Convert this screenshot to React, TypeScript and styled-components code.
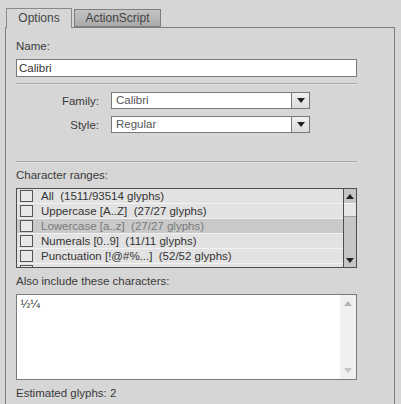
import React from 'react';
import styled, { createGlobalStyle } from 'styled-components';

const GlobalStyle = createGlobalStyle`
  body {
    margin: 0;
    background: #d6d6d6;
    font-family: "Liberation Sans", Arial, sans-serif;
    font-size: 11.5px;
    color: #3a3a3a;
  }
`

const Page = styled.div`
  padding: 8px 0 0 5px;
  width: 390px;
  height: 396px;
  overflow: hidden;
`

const TabBar = styled.div`
  display: flex;
  align-items: flex-end;
  gap: 2px;
  padding-left: 1px;
  height: 19px;
  position: relative;
  z-index: 1;
`

const Tab = styled.div<{ $active?: boolean; $w: number }>`
  box-sizing: border-box;
  width: ${p => p.$w}px;
  height: ${p => (p.$active ? 20 : 18)}px;
  margin-bottom: ${p => (p.$active ? -1 : 0)}px;
  border: 1px solid ${p => (p.$active ? '#8a8a8a' : '#7e7e7e')};
  border-bottom: ${p => (p.$active ? 'none' : '1px solid #7e7e7e')};
  background: ${p => (p.$active ? '#d6d6d6' : 'linear-gradient(#c4c4c4, #a9a9a9)')};
  display: flex;
  align-items: center;
  justify-content: center;
  padding-bottom: ${p => (p.$active ? 1 : 0)}px;
  color: #444;
  font-size: 12px;
`

const Panel = styled.div`
  border: 1px solid #7e7e7e;
  border-bottom: none;
  padding: 0 37px 0 10px;
  height: 380px;
`

const Label = styled.div<{ $mt?: number }>`
  line-height: 14px;
  margin-top: ${p => p.$mt ?? 6}px;
`

const TextInput = styled.div`
  box-sizing: border-box;
  margin-top: 6px;
  height: 18px;
  border: 1px solid #7a7a7a;
  background: #fff;
  padding-left: 2px;
  line-height: 16px;
  color: #333;
`

const Separator = styled.div<{ $mt: number }>`
  margin-top: ${p => p.$mt}px;
  height: 1px;
  background: #a9a9a9;
  box-shadow: 0 1px 0 #e2e2e2;
`

const FormGrid = styled.div`
  margin-top: 8px;
  display: grid;
  grid-template-columns: 83px 199px;
  column-gap: 12px;
  row-gap: 7px;
  align-items: center;
`

const FieldLabel = styled.div`
  text-align: right;
`

const Select = styled.div`
  box-sizing: border-box;
  height: 17px;
  border: 1px solid #7a7a7a;
  background: #fff;
  display: flex;
`

const SelectText = styled.div`
  flex: 1;
  padding-left: 4px;
  line-height: 15px;
  color: #555;
`

const SelectButton = styled.div`
  width: 17px;
  border-left: 1px solid #7a7a7a;
  background: linear-gradient(#f0f0f0, #dcdcdc);
  display: flex;
  align-items: center;
  justify-content: center;
`

const List = styled.div`
  box-sizing: border-box;
  margin-top: 6px;
  height: 80px;
  border: 1px solid #4e4e4e;
  display: flex;
  overflow: hidden;
`

const Rows = styled.div`
  flex: 1;
  overflow: hidden;
`

const Row = styled.div<{ $hl?: boolean }>`
  box-sizing: border-box;
  height: 15px;
  display: flex;
  align-items: center;
  padding-left: 3px;
  background: ${p => (p.$hl ? '#c9c9c9' : '#e2e2e2')};
  border-bottom: 1px solid #f2f2f2;
  color: ${p => (p.$hl ? '#7a7a7a' : '#333')};
  white-space: pre;
  overflow: hidden;
`

const Check = styled.div`
  box-sizing: border-box;
  flex: none;
  width: 13px;
  height: 12px;
  border: 1px solid #555;
  background: #e8e8e8;
  margin-right: 8px;
`

const ScrollBar = styled.div`
  width: 12px;
  border-left: 1px solid #4e4e4e;
  background: #c6c6c6;
  display: flex;
  flex-direction: column;
`

const ScrollBtn = styled.div`
  height: 14px;
  display: flex;
  align-items: center;
  justify-content: center;
  background: #c6c6c6;
`

const Thumb = styled.div`
  height: 12px;
  background: #e6e6e6;
  border-top: 1px solid #f4f4f4;
  border-bottom: 1px solid #a0a0a0;
`

const Track = styled.div`
  flex: 1;
`

const TextArea = styled.div`
  box-sizing: border-box;
  margin-top: 6px;
  height: 86px;
  border: 1px solid #7a7a7a;
  background: #fff;
  display: flex;
`

const AreaText = styled.div`
  flex: 1;
  padding: 3px 0 0 3px;
  font-family: "DejaVu Sans", sans-serif;
  font-size: 11px;
  letter-spacing: -1px;
  color: #333;
`

const AreaScroll = styled.div`
  width: 16px;
  background: #efefef;
  display: flex;
  flex-direction: column;
  justify-content: space-between;
  padding: 6px 0 6px;
  align-items: center;
`

const Arrow = ({ up, color = '#222' }: { up?: boolean; color?: string }) => (
  <svg width="8" height="5" viewBox="0 0 8 5">
    <path d={up ? 'M0 5 L4 0 L8 5 Z' : 'M0 0 L8 0 L4 5 Z'} fill={color} />
  </svg>
)

const ranges = [
  { text: 'All  (1511/93514 glyphs)' },
  { text: 'Uppercase [A..Z]  (27/27 glyphs)' },
  { text: 'Lowercase [a..z]  (27/27 glyphs)', hl: true },
  { text: 'Numerals [0..9]  (11/11 glyphs)' },
  { text: 'Punctuation [!@#%...]  (52/52 glyphs)' },
  { text: 'Basic Latin  (95/95 glyphs)' },
]

export default function App() {
  return (
    <Page>
      <GlobalStyle />
      <TabBar>
        <Tab $active $w={66}>Options</Tab>
        <Tab $w={87}>ActionScript</Tab>
      </TabBar>
      <Panel>
        <Label $mt={11}>Name:</Label>
        <TextInput>Calibri</TextInput>
        <Separator $mt={6} />
        <FormGrid>
          <FieldLabel>Family:</FieldLabel>
          <Select>
            <SelectText>Calibri</SelectText>
            <SelectButton><Arrow /></SelectButton>
          </Select>
          <FieldLabel>Style:</FieldLabel>
          <Select>
            <SelectText>Regular</SelectText>
            <SelectButton><Arrow /></SelectButton>
          </Select>
        </FormGrid>
        <Separator $mt={28} />
        <Label>Character ranges:</Label>
        <List>
          <Rows>
            {ranges.map(r => (
              <Row key={r.text} $hl={r.hl}>
                <Check />
                {r.text}
              </Row>
            ))}
          </Rows>
          <ScrollBar>
            <ScrollBtn><Arrow up /></ScrollBtn>
            <Thumb />
            <Track />
            <ScrollBtn><Arrow /></ScrollBtn>
          </ScrollBar>
        </List>
        <Label>Also include these characters:</Label>
        <TextArea>
          <AreaText>½¼</AreaText>
          <AreaScroll>
            <Arrow up color="#b4b4b4" />
            <Arrow color="#c4c4c4" />
          </AreaScroll>
        </TextArea>
        <Label>Estimated glyphs: 2</Label>
      </Panel>
    </Page>
  )
}
